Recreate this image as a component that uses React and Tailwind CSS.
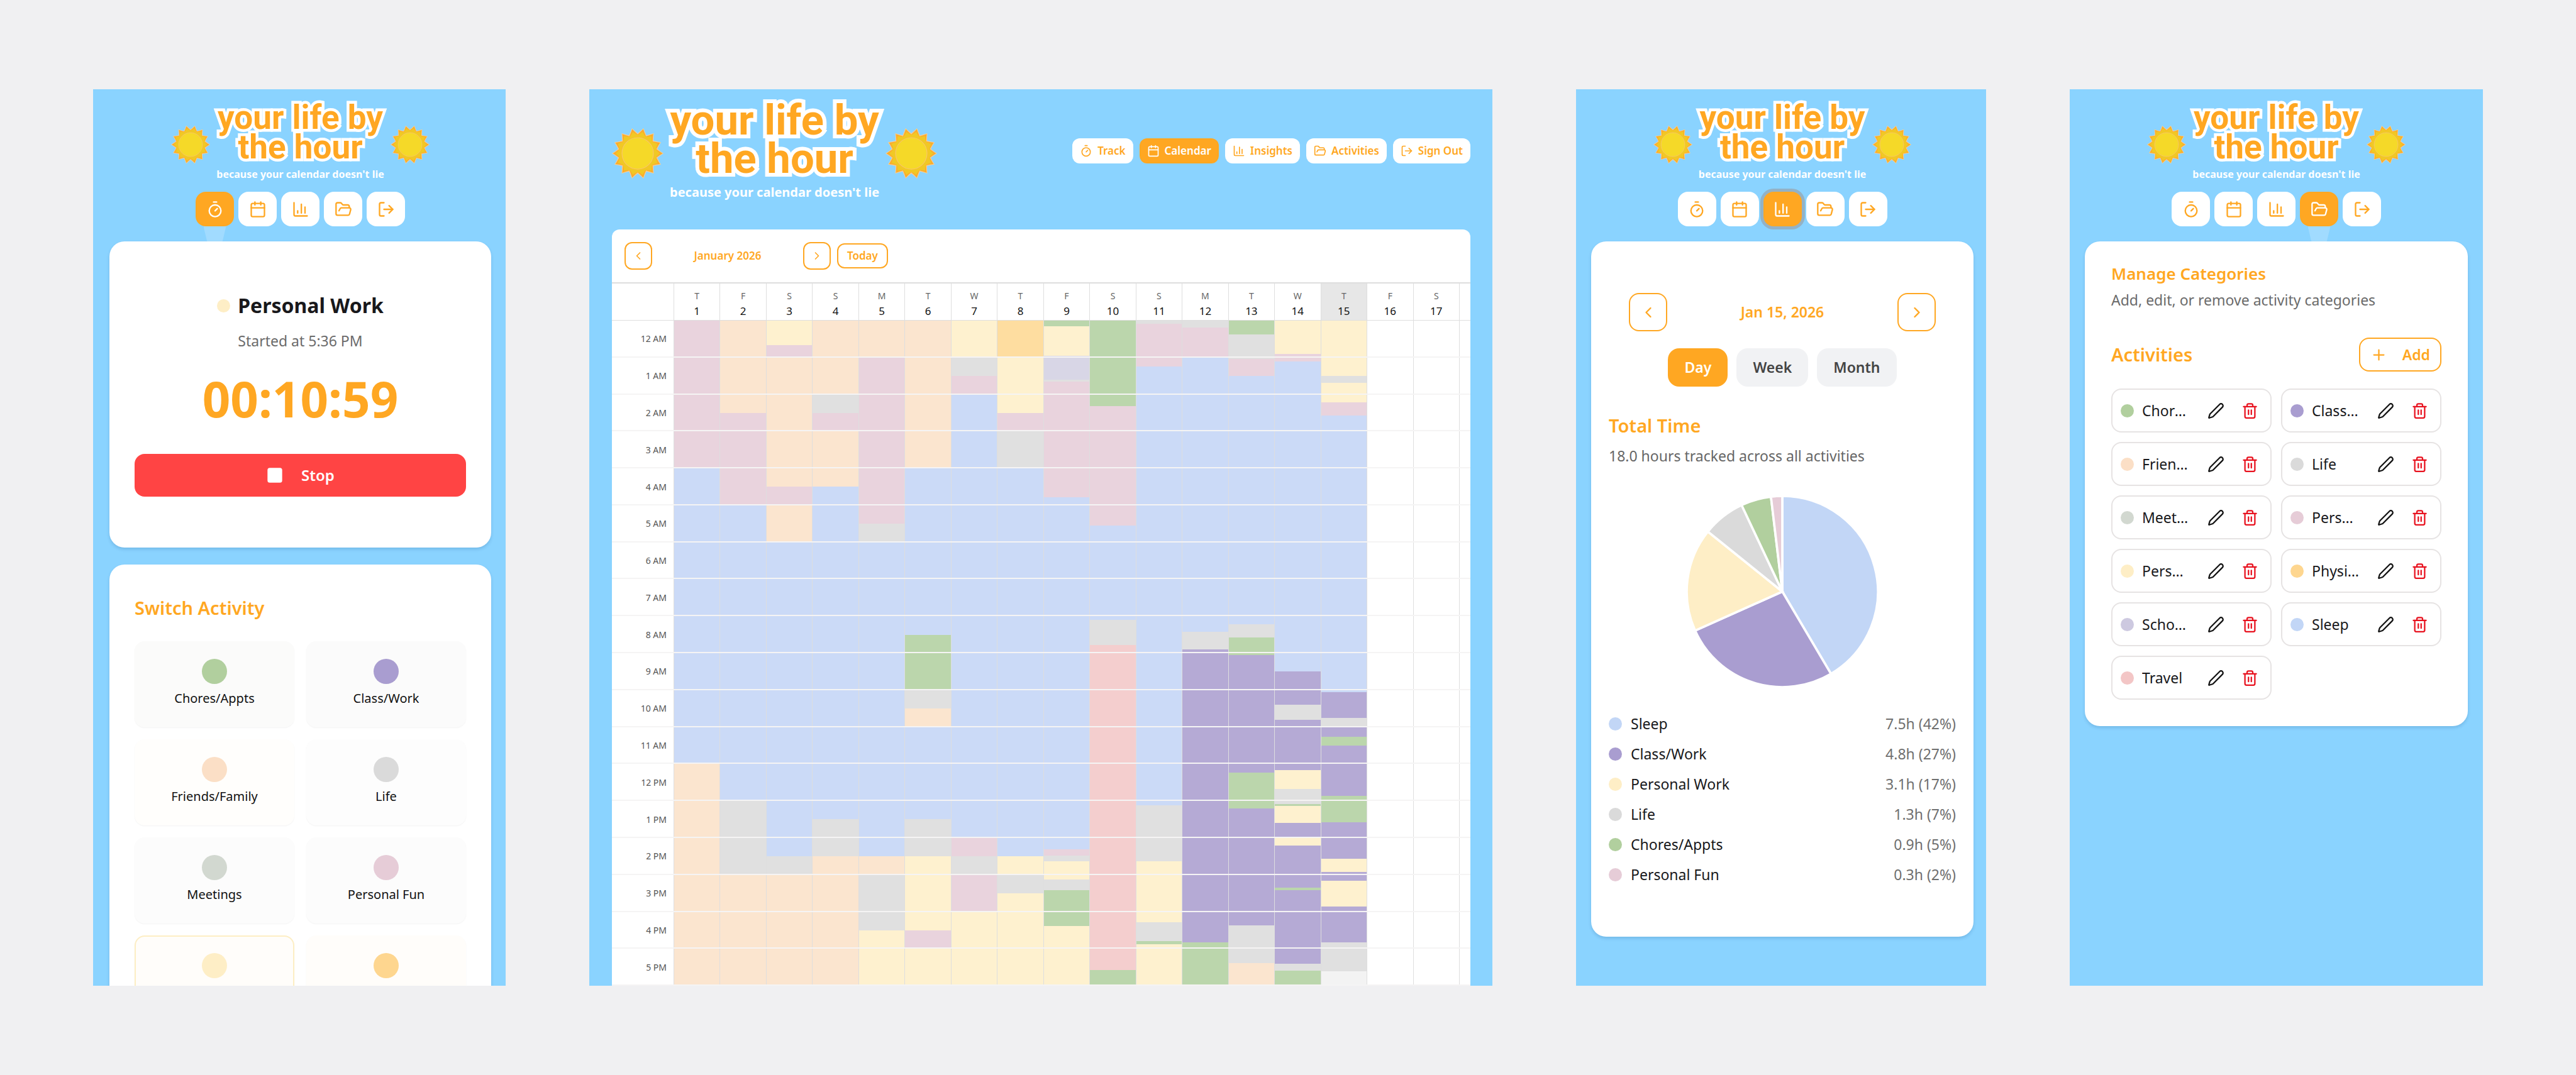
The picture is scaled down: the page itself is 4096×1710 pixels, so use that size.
import clsx from 'clsx';
import {
  Calendar,
  ChartColumn,
  ChevronLeft,
  ChevronRight,
  FolderOpen,
  LogOut,
  Pen,
  Plus,
  Square,
  Timer,
  Trash2,
} from 'lucide-react';

const ACTIVITIES = {
  chores: { name: 'Chores/Appts', color: '#b1cf9e', block: '#bbd6ac', tile: '#fbfbfa' },
  class: { name: 'Class/Work', color: '#a99dd0', block: '#b5aad5', tile: '#fbfbfb' },
  friends: { name: 'Friends/Family', color: '#fbdfc6', block: '#fbe5cf', tile: '#fffefc' },
  life: { name: 'Life', color: '#dadada', block: '#e0e0e0', tile: '#fdfdfd' },
  meetings: { name: 'Meetings', color: '#d2d8d0', block: '#dbe0d9', tile: '#fcfcfc' },
  fun: { name: 'Personal Fun', color: '#e6ccd7', block: '#e9d3dd', tile: '#fcfcfc' },
  work: { name: 'Personal Work', color: '#feeec6', block: '#fef1cf', tile: '#fffdfa' },
  physical: { name: 'Physical', color: '#fed68f', block: '#fedda0', tile: '#fffdfa' },
  school: { name: 'Schoolwork', color: '#cdc9e0', block: '#d8d6e6', tile: '#fcfcfc' },
  sleep: { name: 'Sleep', color: '#c2d6f6', block: '#cbdaf7', tile: '#fcfcfc' },
  travel: { name: 'Travel', color: '#f3c6c6', block: '#f4cece', tile: '#fcfcfc' },
  running: { name: 'Running', color: '#f3f3f3', block: '#f3f3f3', tile: '#fcfcfc' },
};

const NAV = [
  { label: 'Track', icon: Timer },
  { label: 'Calendar', icon: Calendar },
  { label: 'Insights', icon: ChartColumn },
  { label: 'Activities', icon: FolderOpen },
  { label: 'Sign Out', icon: LogOut },
];

// Each entry is [activity, hour it ends at]; it starts where the previous one ended
const HOURS_SHOWN = 18;
const DAYS = [
  { day: 'T', blocks: [['fun', 4], ['sleep', 12], ['friends', 18]] },
  { day: 'F', blocks: [['friends', 2.5], ['fun', 5], ['sleep', 13], ['life', 15], ['friends', 18]] },
  { day: 'S', blocks: [['work', 0.67], ['fun', 1], ['friends', 4.5], ['fun', 5], ['friends', 6], ['sleep', 14.5], ['life', 15], ['friends', 18]] },
  { day: 'S', blocks: [['friends', 2], ['life', 2.5], ['fun', 3], ['friends', 4.5], ['sleep', 13.5], ['life', 14.5], ['friends', 18]] },
  { day: 'M', blocks: [['friends', 1], ['fun', 5.5], ['life', 6], ['sleep', 14.5], ['friends', 15], ['life', 16.5], ['work', 18]] },
  { day: 'T', blocks: [['friends', 4], ['sleep', 8.5], ['chores', 10], ['life', 10.5], ['friends', 11], ['sleep', 13.5], ['life', 14.5], ['work', 16.5], ['fun', 17], ['work', 18]] },
  { day: 'W', blocks: [['work', 1], ['life', 1.5], ['fun', 2], ['sleep', 14], ['fun', 14.5], ['life', 15], ['fun', 16], ['work', 18]] },
  { day: 'T', blocks: [['physical', 1], ['work', 2.5], ['fun', 3], ['life', 4], ['sleep', 14.5], ['work', 15], ['life', 15.5], ['work', 18]] },
  { day: 'F', blocks: [['chores', 0.15], ['work', 0.95], ['school', 1.6], ['life', 1.65], ['fun', 4.78], ['sleep', 14.3], ['fun', 14.48], ['life', 14.63], ['work', 15.13], ['life', 15.41], ['chores', 16.38], ['work', 18]] },
  { day: 'S', blocks: [['chores', 2.32], ['fun', 5.55], ['sleep', 8.1], ['life', 8.78], ['travel', 17.58], ['chores', 18]] },
  { day: 'S', blocks: [['life', 0.08], ['fun', 1.25], ['sleep', 13.12], ['life', 14.63], ['work', 16.29], ['life', 16.79], ['chores', 16.87], ['work', 18]] },
  { day: 'M', blocks: [['life', 0.19], ['fun', 1], ['sleep', 8.43], ['life', 8.9], ['class', 16.82], ['chores', 18]] },
  { day: 'T', blocks: [['chores', 0.38], ['life', 1.04], ['fun', 1.49], ['sleep', 8.22], ['life', 8.57], ['chores', 9.06], ['class', 12.24], ['chores', 13.2], ['class', 16.36], ['life', 17.39], ['friends', 18]] },
  { day: 'W', blocks: [['work', 0.9], ['fun', 1.11], ['sleep', 9.5], ['class', 10.4], ['life', 10.8], ['class', 12.17], ['work', 12.68], ['life', 13.08], ['chores', 13.14], ['work', 13.6], ['class', 13.98], ['work', 14.2], ['class', 15.34], ['chores', 15.41], ['class', 17.41], ['life', 17.6], ['chores', 18]] },
  { day: 'T', today: true, blocks: [['work', 1.49], ['life', 1.69], ['work', 2.21], ['fun', 2.57], ['sleep', 10.05], ['class', 10.76], ['life', 11], ['class', 11.26], ['chores', 11.5], ['class', 12.87], ['chores', 13.57], ['class', 14.57], ['work', 14.93], ['class', 15.16], ['work', 15.86], ['class', 16.82], ['life', 17.61], ['running', 18]] },
  { day: 'F', blocks: [] },
  { day: 'S', blocks: [] },
];

const TOTALS = [
  { id: 'sleep', value: '7.5h (42%)', share: 41.5 },
  { id: 'class', value: '4.8h (27%)', share: 26.8 },
  { id: 'work', value: '3.1h (17%)', share: 17.5 },
  { id: 'life', value: '1.3h (7%)', share: 7.2 },
  { id: 'chores', value: '0.9h (5%)', share: 5.1 },
  { id: 'fun', value: '0.3h (2%)', share: 1.9 },
];

const hourLabel = (h) => `${h % 12 === 0 ? 12 : h % 12} ${h < 12 ? 'AM' : 'PM'}`;

const polar = (angle, r) => [
  (50 + r * Math.cos(angle)).toFixed(2),
  (50 + r * Math.sin(angle)).toFixed(2),
];

// 14 rays with sides that curve slightly inwards
function rays(outer, inner) {
  const step = Math.PI / 7;
  const mid = (outer + inner) / 2 - 1;
  let d = `M${polar(0, outer)}`;
  for (let i = 0; i < 14; i++) {
    const a = i * step;
    d += `Q${polar(a + step * 0.22, mid)} ${polar(a + step / 2, inner)}`;
    d += `Q${polar(a + step * 0.78, mid)} ${polar(a + step, outer)}`;
  }
  return d + 'Z';
}

function Sun({ className }) {
  return (
    <svg viewBox="0 0 100 100" className={clsx('mt-2 shrink-0', className)} aria-hidden="true">
      <path d={rays(50, 39)} fill="#fccf8d" />
      <path d={rays(48, 37)} fill="#f9ab2e" />
      <path d={rays(43, 36)} fill="#f1c824" />
      <circle cx="50" cy="50" r="30.5" fill="#f5d928" stroke="#f8c766" strokeWidth="1.5" />
    </svg>
  );
}

function Logo({ large }) {
  return (
    <div className="flex items-center justify-center gap-[10px]">
      <Sun className={large ? 'size-[82px]' : 'size-[62px]'} />
      <div className="text-center font-bold whitespace-nowrap">
        <h1
          className={clsx(
            "font-['Roboto',sans-serif] text-[#ffa722] [paint-order:stroke_fill]",
            large
              ? 'text-[67px] leading-[61px] [-webkit-text-stroke:12px_white]'
              : 'text-[53px] leading-[47px] [-webkit-text-stroke:9px_white]'
          )}
        >
          your life by
          <br />
          the hour
        </h1>
        <p className={clsx('text-white', large ? 'mt-[11px] text-[20px] leading-6' : 'mt-[9px] text-[16px] leading-5')}>
          because your calendar doesn't lie
        </p>
      </div>
      <Sun className={large ? 'size-[82px]' : 'size-[62px]'} />
    </div>
  );
}

function MobileHeader({ active, focused }) {
  return (
    <header className="pt-[22px] pb-6">
      <Logo />
      <nav className="mt-[18px] flex justify-center gap-[7px]">
        {NAV.map(({ label, icon: Icon }) => (
          <a
            key={label}
            href="#"
            aria-label={label}
            className={clsx(
              'relative flex h-[55px] w-[61px] items-center justify-center rounded-2xl',
              label === active ? 'bg-[#ffa722] text-white' : 'bg-white text-[#ffa722]',
              label === active && focused && 'ring-[5px] ring-[#93b2c6]'
            )}
          >
            <Icon size={28} />
            {label === active && !focused && (
              <span className="absolute top-full h-6 w-[36px] bg-white/20 [clip-path:polygon(0_0,100%_0,84%_100%,16%_100%)]" />
            )}
          </a>
        ))}
      </nav>
    </header>
  );
}

function Screen({ children, className }) {
  return (
    <section className={clsx('flex min-h-0 flex-col overflow-hidden bg-[#8ad3ff]', className)}>{children}</section>
  );
}

function Card({ children, className }) {
  return (
    <div className={clsx('shrink-0 rounded-[24px] bg-white shadow-[0_3px_5px_rgba(0,60,120,0.16)]', className)}>
      {children}
    </div>
  );
}

function Dot({ id, className }) {
  return (
    <span
      className={clsx('shrink-0 rounded-full', className)}
      style={{ backgroundColor: ACTIVITIES[id].color }}
    />
  );
}

function TrackScreen() {
  const ids = ['chores', 'class', 'friends', 'life', 'meetings', 'fun', 'work', 'physical'];
  return (
    <Screen className="pr-[23px] pl-[26px]">
      <MobileHeader active="Track" />

      <Card className="px-10 pt-[82px] pb-[81px] text-center">
        <h2 className="flex items-center justify-center gap-3 text-[32px] leading-10 font-bold text-[#18181b]">
          <Dot id="work" className="size-[21px]" />
          Personal Work
        </h2>
        <p className="mt-5 text-[23px] leading-8 text-[#6b6b6b]">Started at 5:36 PM</p>
        <p className="mt-9 text-[78px] leading-20 font-bold text-[#ffa722]">00:10:59</p>
        <button className="mt-12 flex h-[68px] w-full items-center justify-center gap-7 rounded-2xl bg-[#ff4444] text-[24px] font-semibold text-white">
          <Square size={28} fill="currentColor" />
          Stop
        </button>
      </Card>

      <Card className="mt-[27px] px-10 pt-[51px] pb-10">
        <h2 className="text-[29px] leading-9 font-semibold text-[#ffa722]">Switch Activity</h2>
        <div className="mt-[35px] grid grid-cols-2 gap-[19px]">
          {ids.map((id) => (
            <button
              key={id}
              className={clsx(
                'flex h-[137px] flex-col items-center rounded-2xl border-2 pt-[26px] text-[20px] leading-6 text-[#111] shadow-[0_1px_2px_rgba(0,0,0,0.05)]',
                id === 'work' ? 'border-[#fdeec4]' : 'border-transparent'
              )}
              style={{ backgroundColor: ACTIVITIES[id].tile }}
            >
              <Dot id={id} className="mb-[11px] size-10" />
              {ACTIVITIES[id].name}
            </button>
          ))}
        </div>
      </Card>
    </Screen>
  );
}

function DayColumn({ blocks }) {
  return (
    <div className="border-l border-[#dedede]">
      {blocks.map(([id, end], i) => {
        const start = i === 0 ? 0 : blocks[i - 1][1];
        return (
          <div
            key={i}
            style={{
              height: `${((end - start) / HOURS_SHOWN) * 100}%`,
              backgroundColor: ACTIVITIES[id].block,
            }}
          />
        );
      })}
    </div>
  );
}

function CalendarScreen() {
  const hours = Array.from({ length: HOURS_SHOWN }, (_, h) => h);
  const columns = 'grid grid-cols-[98px_repeat(17,minmax(0,1fr))_18px]';
  return (
    <Screen className="pr-[35px] pl-9">
      <header className="flex items-center justify-between pt-[19px] pb-[47px]">
        <Logo large />
        <nav className="flex gap-[10px]">
          {NAV.map(({ label, icon: Icon }) => (
            <a
              key={label}
              href="#"
              className={clsx(
                'flex h-10 items-center gap-2 rounded-xl px-3 text-[17px] font-semibold whitespace-nowrap',
                label === 'Calendar' ? 'bg-[#ffa722] text-white' : 'bg-white text-[#ffa722]'
              )}
            >
              <Icon size={20} />
              {label}
            </a>
          ))}
        </nav>
      </header>

      <div className="flex min-h-0 flex-1 flex-col overflow-hidden rounded-t-xl bg-white">
        <div className="flex items-center border-b-2 border-[#dedede] p-5 text-[17px] font-semibold text-[#ffa722]">
          <button aria-label="Previous month" className="flex size-11 items-center justify-center rounded-xl border-2 border-[#ffa722]">
            <ChevronLeft size={20} />
          </button>
          <h2 className="w-60 text-center">January 2026</h2>
          <button aria-label="Next month" className="flex size-11 items-center justify-center rounded-xl border-2 border-[#ffa722]">
            <ChevronRight size={20} />
          </button>
          <button className="ml-[10px] h-10 rounded-xl border-2 border-[#ffa722] px-[14px]">Today</button>
        </div>

        <div className={clsx(columns, 'border-b border-[#dedede] text-center')}>
          <div />
          {DAYS.map(({ day, today }, i) => (
            <div key={i} className={clsx('border-l border-[#dedede] pt-[10px] pb-[2px]', today && 'bg-[#e7e7e7]')}>
              <div className="text-[14px] leading-5 text-[#666]">{day}</div>
              <div className="mt-[2px] text-[17px] leading-6 text-[#111]">{i + 1}</div>
            </div>
          ))}
          <div className="border-l border-[#dedede]" />
        </div>

        <div className={clsx(columns, 'relative min-h-0 flex-1')}>
          <div className="flex flex-col">
            {hours.map((h) => (
              <div key={h} className="flex flex-1 items-center justify-end pr-[11px] text-[14px] leading-5 text-[#555]">
                {hourLabel(h)}
              </div>
            ))}
          </div>
          {DAYS.map(({ blocks }, i) => (
            <DayColumn key={i} blocks={blocks} />
          ))}
          <DayColumn blocks={[]} />

          {/* Hour lines over the blocks */}
          <div className="pointer-events-none absolute inset-0 flex flex-col">
            {hours.map((h) => (
              <div key={h} className="flex-1 border-b-2 border-[#f5f4f4]" />
            ))}
          </div>
        </div>
      </div>
    </Screen>
  );
}

function PieChart() {
  let from = 0;
  return (
    <svg viewBox="0 0 100 100" className="mx-auto mt-12 size-[304px]" role="img" aria-label="Time per activity">
      {TOTALS.map(({ id, share }) => {
        const a = (from / 100) * 2 * Math.PI - Math.PI / 2;
        from += share;
        const b = (from / 100) * 2 * Math.PI - Math.PI / 2;
        return (
          <path
            key={id}
            d={`M50 50L${polar(a, 50)}A50 50 0 ${share > 50 ? 1 : 0} 1 ${polar(b, 50)}Z`}
            fill={ACTIVITIES[id].color}
            stroke="white"
            strokeWidth="1.2"
          />
        );
      })}
    </svg>
  );
}

function InsightsScreen() {
  return (
    <Screen className="pr-5 pl-6">
      <MobileHeader active="Insights" focused />

      <Card className="px-7 pt-[82px] pb-[83px]">
        <div className="flex items-center justify-between px-8 text-[23px] font-semibold text-[#ffa722]">
          <button aria-label="Previous day" className="flex size-[61px] items-center justify-center rounded-2xl border-2 border-[#ffa722]">
            <ChevronLeft size={28} />
          </button>
          <span>Jan 15, 2026</span>
          <button aria-label="Next day" className="flex size-[61px] items-center justify-center rounded-2xl border-2 border-[#ffa722]">
            <ChevronRight size={28} />
          </button>
        </div>

        <div className="mt-[27px] flex justify-center gap-[14px] text-[23px] font-semibold">
          {['Day', 'Week', 'Month'].map((range) => (
            <button
              key={range}
              className={clsx(
                'h-[61px] rounded-[18px] px-[26px]',
                range === 'Day' ? 'bg-[#ffa722] text-white' : 'bg-[#f1f2f4] text-[#444]'
              )}
            >
              {range}
            </button>
          ))}
        </div>

        <h2 className="mt-11 text-[29px] leading-9 font-semibold text-[#ffa722]">Total Time</h2>
        <p className="mt-[14px] text-[23px] leading-8 text-[#666]">18.0 hours tracked across all activities</p>

        <PieChart />

        <ul className="mt-[42px] flex flex-col gap-4 text-[23px] leading-8">
          {TOTALS.map(({ id, value }) => (
            <li key={id} className="flex items-center gap-[14px] text-[#18181b]">
              <Dot id={id} className="size-[21px]" />
              {ACTIVITIES[id].name}
              <span className="ml-auto text-[#6f6f6f]">{value}</span>
            </li>
          ))}
        </ul>
      </Card>
    </Screen>
  );
}

function ActivitiesScreen() {
  const ids = ['chores', 'class', 'friends', 'life', 'meetings', 'fun', 'work', 'physical', 'school', 'sleep', 'travel'];
  return (
    <Screen className="px-6">
      <MobileHeader active="Activities" />

      <Card className="px-[42px] pt-[35px] pb-[42px]">
        <h2 className="text-[26px] leading-8 font-semibold text-[#ffa722]">Manage Categories</h2>
        <p className="mt-[10px] text-[23px] leading-8 text-[#6b6b6b]">Add, edit, or remove activity categories</p>

        <div className="mt-11 flex items-center justify-between text-[#ffa722]">
          <h3 className="text-[29px] leading-9 font-semibold">Activities</h3>
          <button className="flex h-[54px] items-center gap-6 rounded-2xl border-2 border-[#ffa722] px-4 text-[23px] font-semibold">
            <Plus size={27} />
            Add
          </button>
        </div>

        <ul className="mt-[27px] grid grid-cols-2 gap-[15px]">
          {ids.map((id) => (
            <li key={id} className="flex h-[70px] items-center rounded-2xl border-2 border-[#e6e3e3] pr-[6px] pl-[13px]">
              <Dot id={id} className="size-[21px]" />
              <span className="mr-[14px] ml-[13px] min-w-0 flex-1 truncate text-[23px] leading-8 text-[#18181b]">
                {ACTIVITIES[id].name}
              </span>
              <button aria-label={`Edit ${ACTIVITIES[id].name}`} className="flex w-[54px] justify-center text-[#111]">
                <Pen size={27} />
              </button>
              <button aria-label={`Delete ${ACTIVITIES[id].name}`} className="flex w-[54px] justify-center text-[#e8121f]">
                <Trash2 size={27} />
              </button>
            </li>
          ))}
        </ul>
      </Card>
    </Screen>
  );
}

function App() {
  return (
    <main className="grid h-screen grid-cols-[656fr_1436fr_652fr_657fr] grid-rows-[minmax(0,1fr)] gap-[133px] bg-[#f0f0f2] px-[148px] py-[142px] font-['Noto_Sans',sans-serif]">
      <TrackScreen />
      <CalendarScreen />
      <InsightsScreen />
      <ActivitiesScreen />
    </main>
  );
}

export default App;
